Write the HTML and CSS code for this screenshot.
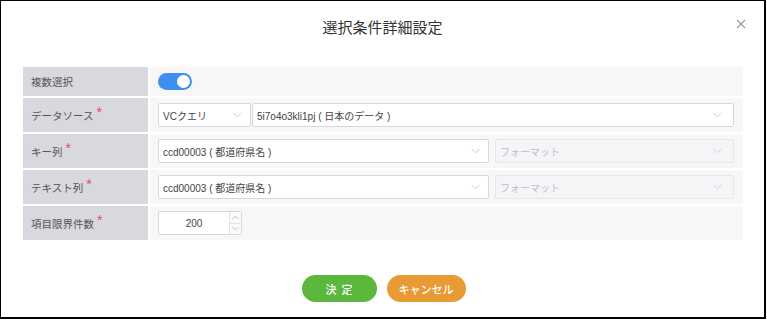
FILE: index.html
```html
<!DOCTYPE html>
<html lang="ja">
<head>
<meta charset="utf-8">
<link rel="stylesheet" href="styles.css">
</head>
<body>
<div class="dialog">
  <div class="header">
    <span></span>
    <h1 class="title">選択条件詳細設定</h1>
    <button class="close" aria-label="close">
      <svg width="10" height="10" viewBox="0 0 10 10"><path d="M1 1L9 9M9 1L1 9" stroke="#9a9a9a" stroke-width="1.1" fill="none"/></svg>
    </button>
  </div>
  <div class="form">
    <div class="row row-first">
      <div class="label">複数選択</div>
      <div class="value">
        <span class="toggle"><span class="knob"></span></span>
      </div>
    </div>
    <div class="row">
      <div class="label">データソース<span class="req">*</span></div>
      <div class="value">
        <div class="select sel-type"><span class="txt">VCクエリ</span><svg class="chev" width="9" height="6" viewBox="0 0 9 6"><path d="M0.5 0.8L4.5 4.8L8.5 0.8" stroke="#c8cad0" stroke-width="1" fill="none"/></svg></div>
        <div class="select grow"><span class="txt">5i7o4o3kli1pj ( 日本のデータ )</span><svg class="chev" width="9" height="6" viewBox="0 0 9 6"><path d="M0.5 0.8L4.5 4.8L8.5 0.8" stroke="#c8cad0" stroke-width="1" fill="none"/></svg></div>
      </div>
    </div>
    <div class="row">
      <div class="label">キー列<span class="req">*</span></div>
      <div class="value spaced">
        <div class="select sel-col"><span class="txt">ccd00003 ( 都道府県名 )</span><svg class="chev" width="9" height="6" viewBox="0 0 9 6"><path d="M0.5 0.8L4.5 4.8L8.5 0.8" stroke="#c8cad0" stroke-width="1" fill="none"/></svg></div>
        <div class="select grow disabled"><span class="txt">フォーマット</span><svg class="chev" width="9" height="6" viewBox="0 0 9 6"><path d="M0.5 0.8L4.5 4.8L8.5 0.8" stroke="#d0d2d8" stroke-width="1" fill="none"/></svg></div>
      </div>
    </div>
    <div class="row">
      <div class="label">テキスト列<span class="req">*</span></div>
      <div class="value spaced">
        <div class="select sel-col"><span class="txt">ccd00003 ( 都道府県名 )</span><svg class="chev" width="9" height="6" viewBox="0 0 9 6"><path d="M0.5 0.8L4.5 4.8L8.5 0.8" stroke="#c8cad0" stroke-width="1" fill="none"/></svg></div>
        <div class="select grow disabled"><span class="txt">フォーマット</span><svg class="chev" width="9" height="6" viewBox="0 0 9 6"><path d="M0.5 0.8L4.5 4.8L8.5 0.8" stroke="#d0d2d8" stroke-width="1" fill="none"/></svg></div>
      </div>
    </div>
    <div class="row row-last">
      <div class="label">項目限界件数<span class="req">*</span></div>
      <div class="value">
        <div class="number">
          <span class="num-val">200</span>
          <span class="spin">
            <span class="spin-btn"><svg width="7" height="5" viewBox="0 0 7 5"><path d="M0.5 4L3.5 1L6.5 4" stroke="#b8bac0" stroke-width="0.9" fill="none"/></svg></span>
            <span class="spin-btn"><svg width="7" height="5" viewBox="0 0 7 5"><path d="M0.5 1L3.5 4L6.5 1" stroke="#b8bac0" stroke-width="0.9" fill="none"/></svg></span>
          </span>
        </div>
      </div>
    </div>
  </div>
  <div class="footer">
    <button class="btn ok">決&nbsp;&nbsp;定</button>
    <button class="btn cancel">キャンセル</button>
  </div>
</div>
</body>
</html>
```

FILE: styles.css
```css
* { box-sizing: border-box; }
html, body { margin: 0; padding: 0; background: #fff; }
body {
  font-family: "Liberation Sans", "Noto Sans CJK JP", sans-serif;
  color: #555;
}
.dialog {
  width: 766px;
  height: 319px;
  border-style: solid;
  border-color: #000;
  border-width: 1px 2px 2px 1px;
  background: #fff;
  display: flex;
  flex-direction: column;
}
.header {
  height: 66px;
  display: grid;
  grid-template-columns: 1fr auto 1fr;
  align-items: start;
  padding-top: 16px;
}
.title {
  margin: 0;
  font-family: "Noto Sans CJK JP", sans-serif;
  font-weight: 400;
  font-size: 15px;
  line-height: 20px;
  color: #333;
}
.close {
  justify-self: end;
  margin-right: 18px;
  margin-top: 2px;
  border: 0;
  background: none;
  padding: 0;
  width: 10px;
  height: 10px;
  display: flex;
}
.form {
  padding: 0 21px 0 22px;
  display: flex;
  flex-direction: column;
  gap: 2px;
}
.row {
  display: grid;
  grid-template-columns: 125px 1fr;
  column-gap: 2px;
  height: 34px;
}
.row-first { height: 29px; }
.label {
  background: #d9d8de;
  display: flex;
  align-items: center;
  padding-left: 8px;
  font-family: "Noto Sans CJK JP", sans-serif;
  font-size: 10.5px;
  color: #555;
}
.req {
  color: #e8457a;
  font-family: "Liberation Sans", sans-serif;
  font-size: 14px;
  line-height: 1;
  margin-left: 3px;
  align-self: flex-start;
  margin-top: 7px;
}
.value {
  background: #f7f7f7;
  display: flex;
  align-items: center;
  padding: 0 9px 0 8px;
}
.spaced .sel-col { margin-right: 6px; }
.toggle {
  width: 34px;
  height: 17px;
  border-radius: 9px;
  background: #3f8ff0;
  display: flex;
  align-items: center;
  justify-content: flex-end;
  padding-right: 2px;
}
.knob {
  width: 13px;
  height: 13px;
  border-radius: 50%;
  background: #fff;
}
.select {
  height: 24px;
  border: 1px solid #d6d8de;
  border-radius: 2px;
  background: #fff;
  display: flex;
  align-items: center;
  justify-content: space-between;
  padding: 0 11px 0 4px;
  font-size: 10px;
  color: #444;
  white-space: nowrap;
}
.txt { font-family: "Liberation Sans", "Noto Sans CJK JP", sans-serif; }
.sel-type { width: 93px; margin-right: 1px; padding-right: 8px; }
.sel-col { width: 331px; padding-right: 8px; }
.grow { flex: 1; }
.disabled {
  background: #f4f5f7;
  border-color: #e6e7ea;
  color: #bdbfc5;
}
.chev { flex: none; }
.number {
  width: 84px;
  height: 24px;
  border: 1px solid #d6d8de;
  border-radius: 2px;
  background: #fff;
  display: flex;
  font-size: 10px;
  color: #444;
}
.num-val {
  flex: 1;
  display: flex;
  align-items: center;
  justify-content: center;
}
.spin {
  width: 12px;
  border-left: 1px solid #e2e3e7;
  display: flex;
  flex-direction: column;
  background: #fafafa;
}
.spin-btn {
  flex: 1;
  display: flex;
  align-items: center;
  justify-content: center;
}
.spin-btn + .spin-btn { border-top: 1px solid #e2e3e7; }
.footer {
  display: flex;
  justify-content: center;
  gap: 10px;
  margin-top: 35px;
  padding-left: 2px;
}
.btn {
  height: 27px;
  border: 0;
  border-radius: 14px;
  color: #fff;
  font-family: "Noto Sans CJK JP", sans-serif;
  font-size: 11px;
  font-weight: 500;
  padding: 0;
}
.ok { width: 75px; background: #5cb83d; }
.cancel { width: 79px; background: #e89a34; }
```
